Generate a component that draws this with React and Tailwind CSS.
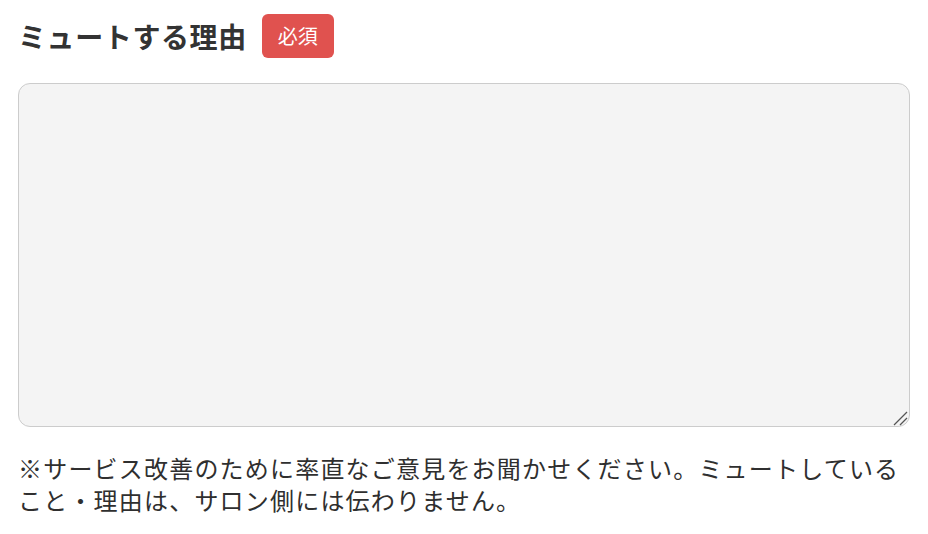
export default function App() {
  return (
    <div
      className="w-[928px] h-[534px] bg-white px-[18px] pt-[14px]"
      style={{ fontFamily: '"Noto Sans CJK JP", "Noto Sans", sans-serif' }}
    >
      <div className="flex items-center gap-[15px] h-[44px]">
        <h2 className="text-[28px] font-bold text-[#333333] leading-none tracking-[0.6px]">ミュートする理由</h2>
        <span className="flex items-center justify-center w-[72px] h-[44px] rounded-[6px] bg-[#e0524f] text-white text-[20px] leading-none">
          必須
        </span>
      </div>
      <div className="relative mt-[25px] w-[892px] h-[344px]">
        <textarea className="block w-full h-full rounded-[12px] border border-[#cccccc] bg-[#f4f4f4] resize-none outline-none" />
        <svg
          className="absolute right-[2px] bottom-[1px] pointer-events-none"
          width="16"
          height="16"
          viewBox="0 0 16 16"
        >
          <line x1="2" y1="15" x2="15" y2="2" stroke="#555" strokeWidth="1.3" />
          <line x1="8" y1="15" x2="15" y2="8" stroke="#555" strokeWidth="1.3" />
        </svg>
      </div>
      <p className="mt-[25px] text-[24px] leading-[32px] text-[#2f2f2f] tracking-[1.2px]">
        ※サービス改善のために率直なご意見をお聞かせください。ミュートしていること・理由は、サロン側には伝わりません。
      </p>
    </div>
  );
}
